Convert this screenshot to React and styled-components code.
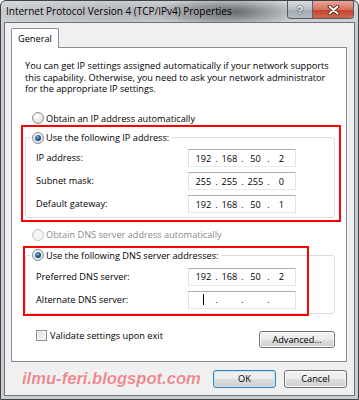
import React from 'react';
import styled, { createGlobalStyle } from 'styled-components';

const GlobalStyle = createGlobalStyle`
  html, body {
    margin: 0;
    padding: 0;
    background: #fff;
  }
  body {
    font-family: "Open Sans", "Liberation Sans", sans-serif;
    color: #000;
  }
`;

const Window = styled.div`
  width: 359px;
  height: 400px;
  box-sizing: border-box;
  display: flex;
  flex-direction: column;
  padding: 0 3px 3px 3px;
  border: 1px solid #3f4348;
  border-radius: 6px 6px 0 0;
  background:
    radial-gradient(ellipse 75px 15px at 228px 11px, rgba(72, 74, 78, 0.8), rgba(72, 74, 78, 0) 100%),
    radial-gradient(ellipse 150px 13px at 120px 11px, rgba(120, 122, 126, 0.45), rgba(120, 122, 126, 0) 100%),
    linear-gradient(to bottom, #d3d6da, #c7cbd0 30px, #c9cdd2);
`;

const TitleBar = styled.div`
  height: 21px;
  display: flex;
  align-items: flex-start;
`;

const Title = styled.div`
  padding-left: 2px;
  font-size: 10px;
  line-height: 20px;
  color: #000;
  text-shadow: 0 0 6px rgba(255, 255, 255, 0.6);
`;

const CaptionButtons = styled.div`
  margin-left: auto;
  margin-right: 1px;
  display: flex;
  height: 17px;
  border: 1px solid #545a62;
  border-top: none;
  border-radius: 0 0 4px 4px;
  overflow: hidden;
`;

const HelpButton = styled.div`
  width: 24px;
  display: flex;
  align-items: center;
  justify-content: center;
  border-right: 1px solid #5d636b;
  background: linear-gradient(to bottom, #d9dde2, #b9bfc6 50%, #a3aab3 51%, #b4bac2);
  font-family: "Liberation Sans", sans-serif;
  font-weight: bold;
  font-size: 11px;
  color: #fff;
  text-shadow: 0 0 1px #2e3238, 0 0 2px #2e3238;
`;

const CloseButton = styled.div`
  width: 40px;
  display: flex;
  align-items: center;
  justify-content: center;
  background: linear-gradient(to bottom, #e8a799, #d4735f 50%, #c4422a 51%, #d0674e);
`;

const Client = styled.div`
  flex: 1;
  display: flex;
  flex-direction: column;
  background: #f0f0f0;
  border: 1px solid #6e737a;
  padding: 5px 7px 0 6px;
`;

const TabStrip = styled.div`
  display: flex;
`;

const Tab = styled.div`
  position: relative;
  z-index: 1;
  height: 19px;
  margin-bottom: -1px;
  padding: 0 6px;
  background: #fff;
  border: 1px solid #898c95;
  border-bottom: none;
  border-radius: 2px 2px 0 0;
  font-size: 9.2px;
  line-height: 20px;
`;

const Panel = styled.div`
  display: flex;
  flex-direction: column;
  background: #fff;
  border: 1px solid #898c95;
  padding: 12px 11px 13px 13px;
  font-size: 9.2px;
`;

const Intro = styled.p`
  margin: 0;
  line-height: 11.5px;
  white-space: nowrap;
`;

const RadioRow = styled.label`
  display: flex;
  align-items: center;
  height: 13px;
  padding-left: 7px;
  margin-top: ${p => p.$top || 0}px;
  color: ${p => (p.$disabled ? '#8a8a8a' : '#000')};
`;

const RadioMark = styled.span`
  position: relative;
  width: 12px;
  height: 12px;
  box-sizing: border-box;
  margin-right: 2px;
  border-radius: 50%;
  border: 1px solid ${p => (p.$disabled ? '#c4c4c4' : '#8a8d91')};
  background: ${p => (p.$disabled
    ? '#f4f4f4'
    : 'radial-gradient(circle at 40% 35%, #ffffff, #e6e6e6 60%, #d2d2d2)')};

  &::after {
    content: '';
    display: ${p => (p.$checked ? 'block' : 'none')};
    position: absolute;
    left: 2px;
    top: 2px;
    width: 6px;
    height: 6px;
    border-radius: 50%;
    background: radial-gradient(circle at 40% 35%, #7fb2e0, #1e4f86 55%, #0d2a4d);
  }
`;

const Section = styled.div`
  position: relative;
  margin-top: ${p => p.$top}px;
`;

const GroupBox = styled.fieldset`
  margin: 0;
  min-width: 0;
  border: 1px solid #d5dfe5;
  border-radius: 3px;
  padding: ${p => p.$padTop}px 10px 4px 10px;
`;

const Legend = styled.legend`
  margin-left: -5px;
  padding: 0 3px 0 1px;
  display: flex;
  align-items: center;
  height: 13px;
  font-size: 9.2px;
`;

const FieldGrid = styled.div`
  display: grid;
  grid-template-columns: 152px 108px;
  row-gap: 5px;
  align-items: center;
`;

const FieldLabel = styled.span`
  line-height: 18px;
`;

const IpField = styled.div`
  width: 108px;
  height: 18px;
  box-sizing: border-box;
  display: flex;
  align-items: center;
  padding-left: 4px;
  background: #fff;
  border: 1px solid;
  border-color: #abadb3 #e2e3ea #e3e9ef #dbdfe6;
`;

const Octet = styled.span`
  width: 21px;
  display: flex;
  justify-content: center;
  align-items: center;
  height: 12px;
`;

const Dot = styled.span`
  width: 5px;
  text-align: center;
`;

const Caret = styled.span`
  width: 1px;
  height: 11px;
  background: #000;
`;

const Highlight = styled.div`
  position: absolute;
  left: ${p => p.$left}px;
  top: ${p => p.$top}px;
  width: ${p => p.$width}px;
  height: ${p => p.$height}px;
  box-sizing: border-box;
  border: 2px solid #f00;
  pointer-events: none;
`;

const BottomRow = styled.div`
  display: flex;
  align-items: flex-start;
  justify-content: space-between;
  margin-top: 15px;
  padding-left: 11px;
`;

const CheckRow = styled.label`
  display: flex;
  align-items: center;
  height: 13px;
`;

const CheckMark = styled.span`
  width: 11px;
  height: 11px;
  box-sizing: border-box;
  margin-right: 3px;
  border: 1px solid #8e8f8f;
  background: linear-gradient(135deg, #dcdcdc, #fbfbfb);
  box-shadow: inset 0 0 0 1px #f4f4f4;
`;

const Button = styled.div`
  width: ${p => p.$width}px;
  height: ${p => p.$height}px;
  margin-top: ${p => p.$top || 0}px;
  box-sizing: border-box;
  display: flex;
  align-items: center;
  justify-content: center;
  border: 1px solid ${p => (p.$default ? '#3c7fb1' : '#707070')};
  border-radius: 3px;
  background: linear-gradient(to bottom, #f2f2f2 0%, #ebebeb 50%, #dddddd 51%, #cfcfcf 100%);
  box-shadow: inset 0 0 0 1px ${p => (p.$default ? '#bfe4f7' : '#fbfbfb')};
  font-size: 9.2px;
`;

const ButtonBar = styled.div`
  display: flex;
  align-items: center;
  gap: 8px;
  margin-top: 7px;
  font-size: 9.2px;
`;

const Watermark = styled.div`
  flex: 1;
  padding-left: 11px;
  font-family: "Liberation Sans", sans-serif;
  font-weight: bold;
  font-style: italic;
  font-size: 16.6px;
  color: #ec8a90;
  text-shadow: 0 0 2px #fff, 0 0 1px #fff;
`;

const Radio = ({ checked, disabled, children, top }) => (
  <RadioRow $disabled={disabled} $top={top}>
    <RadioMark $checked={checked} $disabled={disabled} />
    {children}
  </RadioRow>
);

const IpBox = ({ value, caret }) => (
  <IpField>
    {value.map((oct, i) => (
      <React.Fragment key={i}>
        <Octet>{caret && i === 0 ? <Caret /> : oct}</Octet>
        {i < 3 && <Dot>.</Dot>}
      </React.Fragment>
    ))}
  </IpField>
);

const ipRows = [
  { label: 'IP address:', value: ['192', '168', '50', '2'] },
  { label: 'Subnet mask:', value: ['255', '255', '255', '0'] },
  { label: 'Default gateway:', value: ['192', '168', '50', '1'] },
];

const dnsRows = [
  { label: 'Preferred DNS server:', value: ['192', '168', '50', '2'] },
  { label: 'Alternate DNS server:', value: ['', '', '', ''], caret: true },
];

const renderRows = (rows) => rows.map(row => (
  <React.Fragment key={row.label}>
    <FieldLabel>{row.label}</FieldLabel>
    <IpBox value={row.value} caret={row.caret} />
  </React.Fragment>
));

const App = () => (
  <>
    <GlobalStyle />
    <Window>
      <TitleBar>
        <Title>Internet Protocol Version 4 (TCP/IPv4) Properties</Title>
        <CaptionButtons>
          <HelpButton>?</HelpButton>
          <CloseButton>
            <svg width="13" height="10" viewBox="0 0 13 10">
              <path d="M2.5 1.5 L10.5 8.5 M10.5 1.5 L2.5 8.5" stroke="#4a1a10" strokeWidth="3.6" strokeLinecap="round" />
              <path d="M2.5 1.5 L10.5 8.5 M10.5 1.5 L2.5 8.5" stroke="#fff" strokeWidth="2" strokeLinecap="round" />
            </svg>
          </CloseButton>
        </CaptionButtons>
      </TitleBar>

      <Client>
        <TabStrip>
          <Tab>General</Tab>
        </TabStrip>

        <Panel>
          <Intro>
            You can get IP settings assigned automatically if your network supports<br />
            this capability. Otherwise, you need to ask your network administrator<br />
            for the appropriate IP settings.
          </Intro>

          <Radio top={17}>Obtain an IP address automatically</Radio>

          <Section $top={6.5}>
            <GroupBox $padTop={5}>
              <Legend>
                <RadioMark $checked />
                Use the following IP address:
              </Legend>
              <FieldGrid>{renderRows(ipRows)}</FieldGrid>
            </GroupBox>
            <Highlight $left={-4} $top={-6} $width={320} $height={97} />
          </Section>

          <Radio disabled top={10}>Obtain DNS server address automatically</Radio>

          <Section $top={7.5}>
            <GroupBox $padTop={6}>
              <Legend>
                <RadioMark $checked />
                Use the following DNS server addresses:
              </Legend>
              <FieldGrid>{renderRows(dnsRows)}</FieldGrid>
            </GroupBox>
            <Highlight $left={-2} $top={-2.5} $width={286} $height={70} />
          </Section>

          <BottomRow>
            <CheckRow>
              <CheckMark />
              Validate settings upon exit
            </CheckRow>
            <Button $width={76} $height={17} $top={2}>Advanced...</Button>
          </BottomRow>
        </Panel>

        <ButtonBar>
          <Watermark>ilmu-feri.blogspot.com</Watermark>
          <Button $width={63} $height={18} $default>OK</Button>
          <Button $width={63} $height={18}>Cancel</Button>
        </ButtonBar>
      </Client>
    </Window>
  </>
);

export default App;
